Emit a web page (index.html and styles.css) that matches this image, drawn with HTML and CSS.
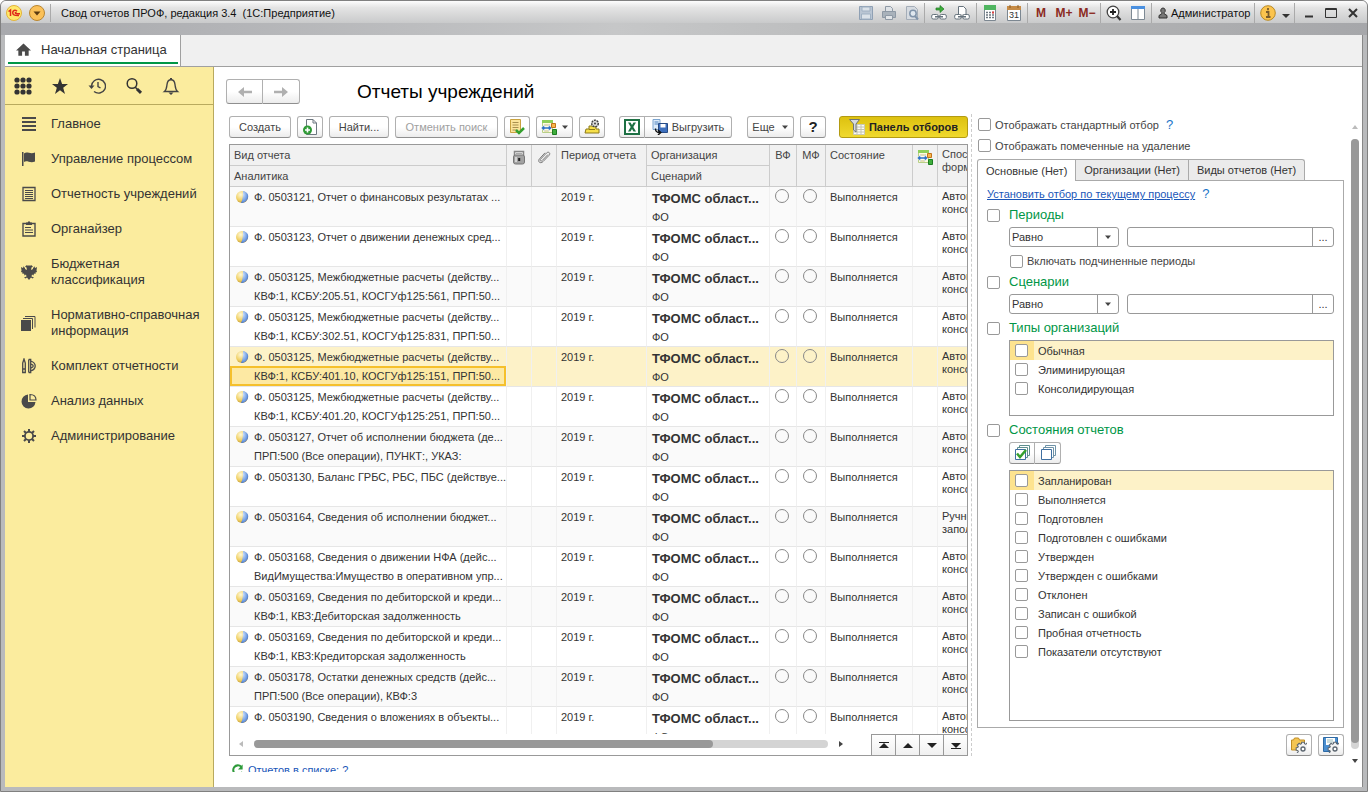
FILE: index.html
```html
<!DOCTYPE html>
<html lang="ru">
<head>
<meta charset="utf-8">
<title>Свод отчетов ПРОФ, редакция 3.4</title>
<link rel="stylesheet" href="styles.css">
</head>
<body>
<svg class="sprite" aria-hidden="true">
  <symbol id="i-down" viewBox="0 0 8 8"><path d="M1 2.500h6L4 6z" fill="#444"/></symbol>
  <symbol id="i-docarrow" viewBox="0 0 16 16"><path d="M1.500 1.500h10v12h-10z" fill="#fffbe0" stroke="#b7cf86"/><path d="M1 1h11v3H1z" fill="#8fd05a"/><path d="M3 6h6M3 12h5" stroke="#c5c08a"/><path d="M0 9l3.500-3v2h4V6L11 9l-3.500 3v-2h-4v2z" fill="#2b6fc4" stroke="#fff" stroke-width=".5"/><path d="M10.500 4.500h4v4h-4z" fill="#f7b64a" stroke="#c2731a"/><path d="M11.500 10.500h4v5h-4z" fill="#3fae3c" stroke="#1e7d22"/></symbol>
  <symbol id="i-ball" viewBox="0 0 14 14"><defs><radialGradient id="gy" cx=".4" cy=".3" r=".8"><stop offset="0" stop-color="#fff9d8"/><stop offset=".6" stop-color="#f0cf62"/><stop offset="1" stop-color="#b08a2c"/></radialGradient><radialGradient id="gb" cx=".3" cy=".3" r=".9"><stop offset="0" stop-color="#c9defb"/><stop offset=".6" stop-color="#6e9be2"/><stop offset="1" stop-color="#31549c"/></radialGradient></defs><circle cx="7" cy="7" r="6" fill="url(#gy)"/><path d="M8 1c4 .6 6 4 5 7s-4 5.500-7 4.900C8 9 8 5 8 1z" fill="url(#gb)"/></symbol>
  <symbol id="i-gear" viewBox="0 0 16 16"><path d="M8 1v14M1 8h14M3 3l10 10M13 3L3 13" stroke="currentColor" stroke-width="2"/><circle cx="8" cy="8" r="5" fill="currentColor"/><circle cx="8" cy="8" r="3.200" fill="#fbec9e"/></symbol>
  <symbol id="i-sgear" viewBox="0 0 12 12"><path d="M6 .5v11M.5 6h11M2.100 2.100l7.800 7.800M9.900 2.100L2.100 9.900" stroke="#5c6670" stroke-width="2.800"/><circle cx="6" cy="6" r="4.500" fill="#5c6670"/><path d="M6 1.300v9.400M1.300 6h9.400M2.700 2.700l6.600 6.600M9.300 2.700L2.700 9.300" stroke="#f3f3f3" stroke-width="1.400"/><circle cx="6" cy="6" r="3.700" fill="#f3f3f3"/><circle cx="6" cy="6" r="1.500" fill="#fff" stroke="#5c6670"/></symbol>
</svg>

<div class="window">
  <header class="titlebar">
    <div class="brand">
      <svg class="logo" viewBox="0 0 18 18"><circle cx="9" cy="9" r="7.500" fill="#ffe96b" stroke="#e3b33a"/><path d="M3.500 7.500l2-1.500v6M12 7.200c-2-1.800-4.500-.8-4.300 1.800.2 2.300 2 2.700 6.300 2.500M11.500 9c-1.500-.8-2 .8.500.8h3" fill="none" stroke="#e02a1c" stroke-width="1.500"/></svg>
      <button class="plain" aria-label="Главное меню"><svg class="logo" viewBox="0 0 18 18"><circle cx="9" cy="9" r="7.500" fill="#fbc158" stroke="#b98530"/><path d="M5.500 7.500h7L9 11.500z" fill="#5b3a10"/></svg></button>
    </div>
    <h1 class="app-title">Свод отчетов ПРОФ, редакция 3.4 &nbsp;(1С:Предприятие)</h1>
    <div class="tools">
      <div class="tg tg-a">
        <svg viewBox="0 0 16 16"><path d="M1.500 1.500h13v13h-13z" fill="#b9c5d3" stroke="#8fa0b4"/><path d="M4 2h8v4H4zM3.500 9h9v5h-9z" fill="#dbe2e9" stroke="#9fb0c2"/></svg>
        <svg viewBox="0 0 16 16" stroke="#8e99a5"><path d="M4.500 7V1.500h5l2 2V7" fill="#dfe3e7"/><path d="M1.500 6.500h13v6h-13z" fill="#a9b2bb"/><path d="M4.500 10.500h7v4h-7z" fill="#e2e5e8"/></svg>
        <svg viewBox="0 0 16 16"><path d="M2.500 1.500h8l3 3v10h-11z" fill="#d6dbe1" stroke="#a4adb8"/><circle cx="9" cy="8.500" r="3.200" fill="#dfe7ef" stroke="#8094aa" stroke-width="1.500"/><path d="M11 11l3 3.500" stroke="#8094aa" stroke-width="2"/></svg>
      </div>
      <div class="tg tg-b">
        <svg viewBox="0 0 16 16"><path d="M5 3h4V.5L13 4 9 7.500V5H5z" fill="#3fae3c" stroke="#1d7a22" stroke-width=".7"/><rect x=".7" y="9.500" width="6.500" height="4.500" rx="1.500" fill="#fff" stroke="#66737d"/><rect x="8.800" y="9.500" width="6.500" height="4.500" rx="1.500" fill="#fff" stroke="#66737d"/><path d="M4 11.800h8" stroke="#66737d" stroke-width="1.500"/></svg>
        <svg viewBox="0 0 16 16"><path d="M4.500 9V1.500h5l2.500 2.500v5" fill="#fff" stroke="#66737d"/><rect x=".7" y="9.500" width="6.500" height="4.500" rx="1.500" fill="#fff" stroke="#66737d"/><rect x="8.800" y="9.500" width="6.500" height="4.500" rx="1.500" fill="#fff" stroke="#66737d"/><path d="M4 11.800h8" stroke="#66737d" stroke-width="1.500"/></svg>
      </div>
      <div class="tg tg-c">
        <svg viewBox="0 0 16 16"><path d="M2.500.5h11v15h-11z" fill="#fff" stroke="#7c8791"/><path d="M2 0h12v5H2z" fill="#4fb560"/><path d="M4 7.500h8M4 10h8M4 12.500h8" stroke="#6d7780" stroke-width="1.500" stroke-dasharray="2 1"/><path d="M10 6.500h2v2h-2z" fill="#d44"/></svg>
        <svg viewBox="0 0 16 16"><path d="M1.500 2.500h13v13h-13z" fill="#fff" stroke="#7c8791"/><path d="M1 1h14v4H1z" fill="#c68b45"/><path d="M4 0v3M12 0v3" stroke="#8a5a22"/><text x="8" y="13" text-anchor="middle" class="cal">31</text></svg>
      </div>
      <div class="tg tg-d"><button class="mem">M</button><button class="mem">M+</button><button class="mem">M−</button></div>
      <div class="tg tg-e">
        <svg viewBox="0 0 16 16"><circle cx="7" cy="7" r="5.800" fill="#fff" stroke="#444" stroke-width="1.300"/><path d="M7 4v6M4 7h6" stroke="#222" stroke-width="1.800"/><path d="M11 11l3.500 4" stroke="#333" stroke-width="2.200"/></svg>
        <svg viewBox="0 0 16 16"><path d="M1.500 1.500h13v13h-13zM8 4v10" fill="#fff" stroke="#7d8994"/><path d="M1 1h14v3H1z" fill="#4a90e0"/></svg>
      </div>
      <div class="tg tg-f"><svg class="person" viewBox="0 0 10 12"><path d="M5 1a2.300 2.500 0 0 1 1.200 4.600v1.200L9 8.500V11H1V8.500l2.800-1.700V5.600A2.300 2.500 0 0 1 5 1z" fill="#777" stroke="#333"/></svg><span>Администратор</span></div>
      <div class="tg tg-g">
        <svg viewBox="0 0 16 16"><circle cx="8" cy="8" r="7.300" fill="#fbc44e" stroke="#b98a25"/><path d="M8 3v2.200M6 7h2.500v5M6 12h4.500" stroke="#7a5c2c" stroke-width="1.800" fill="none"/></svg>
        <svg class="tiny low" viewBox="0 0 8 8"><path d="M0 2h8L4 6z" fill="#333"/></svg>
      </div>
      <div class="tg tg-h">
        <button class="plain" aria-label="Свернуть"><svg class="win" viewBox="0 0 12 12"><path d="M2 9.500h8" stroke="#333" stroke-width="2"/></svg></button>
        <button class="plain" aria-label="Развернуть"><svg class="win" viewBox="0 0 12 12"><path d="M.5 1.500h11v9H.5zM.5 2.500h11" fill="none" stroke="#333"/></svg></button>
        <button class="plain" aria-label="Закрыть"><svg class="win" viewBox="0 0 12 12"><path d="M2 2l8 8M10 2l-8 8" stroke="#333" stroke-width="2"/></svg></button>
      </div>
    </div>
  </header>
  <div class="band"></div>

  <div class="body">
    <nav class="tabbar">
      <a class="home" href="#"><svg viewBox="0 0 16 14"><path d="M8 0l8 7.500h-2.500V13h-4V8.500h-3V13h-4V7.500H0z" fill="#4a4a4a"/></svg><span>Начальная страница</span></a>
    </nav>
    <div class="columns">
      <aside class="sidebar">
        <div class="quick">
          <button class="plain" aria-label="Меню функций"><svg viewBox="0 0 18 18" fill="#333"><circle cx="3" cy="3" r="2.600"/><circle cx="9" cy="3" r="2.600"/><circle cx="15" cy="3" r="2.600"/><circle cx="3" cy="9" r="2.600"/><circle cx="9" cy="9" r="2.600"/><circle cx="15" cy="9" r="2.600"/><circle cx="3" cy="15" r="2.600"/><circle cx="9" cy="15" r="2.600"/><circle cx="15" cy="15" r="2.600"/></svg></button>
          <button class="plain" aria-label="Избранное"><svg viewBox="0 0 18 18"><path d="M9 1l2.100 5.900H17l-4.800 3.800L14 17l-5-3.700L4 17l1.800-6.300L1 6.900h5.900z" fill="#333"/></svg></button>
          <button class="plain" aria-label="История"><svg viewBox="0 0 18 18" fill="none" stroke="#444" stroke-width="1.400"><path d="M3.500 9A7 6.900 0 1 1 6 14.500M10 5v4.500l2.500 1.500"/><path d="M.5 8.500h6L3.500 12z" fill="#444" stroke="none"/></svg></button>
          <button class="plain" aria-label="Поиск"><svg viewBox="0 0 18 18" fill="none" stroke="#333"><circle cx="7" cy="6.500" r="4.800" stroke-width="1.500"/><path d="M10.300 10.300l2 2" stroke-width="1.500"/><path d="M12 12l4 3.800" stroke-width="3"/></svg></button>
          <button class="plain" aria-label="Оповещения"><svg viewBox="0 0 18 18"><path d="M2.500 14.500c2-1.500 2-3 2.500-7 .4-3.500 2-4.800 4-4.800s3.600 1.300 4 4.800c.5 4 .5 5.500 2.500 7z" fill="none" stroke="#444" stroke-width="1.400"/><path d="M6.500 15.500h5L9 18zM8 1h2v2H8z" fill="#444"/></svg></button>
        </div>
        <ul class="nav">
          <li><a href="#"><svg viewBox="0 0 16 16" fill="#4a4a4a"><path d="M1 1h14v2H1zM1 5h14v2H1zM1 9h14v2H1zM1 13h14v2H1z"/></svg><span>Главное</span></a></li>
          <li><a href="#"><svg viewBox="0 0 16 16" fill="#4a4a4a"><path d="M1 1h1.500v14H1zM3 2.500c3-2.500 6 1 11-1v9c-5 2-8-1.500-11 .5z"/></svg><span>Управление процессом</span></a></li>
          <li><a href="#"><svg viewBox="0 0 16 16" fill="none" stroke="#4a4a4a"><path d="M2 1.500h12v13H2z" stroke-width="1.300"/><path d="M4 4.500h8M4 6.500h8M4 8.500h8M4 10.500h8M4 12.500h8"/></svg><span>Отчетность учреждений</span></a></li>
          <li><a href="#"><svg viewBox="0 0 16 16" fill="none" stroke="#4a4a4a"><path d="M2 2.500h12v12.500H2z" stroke-width="1.400"/><path d="M4 6.500h6M4 9h8M4 11.500h8"/><path d="M5 1.500h1.500L8 0l1.500 1.500H11V4H5z" fill="#4a4a4a" stroke="none"/></svg><span>Органайзер</span></a></li>
          <li><a href="#"><svg viewBox="0 0 16 16" fill="#4a4a4a"><path d="M8 1l1 1 1-1 2 1.500-1.500 1L10 6l2-1V3l1 1 .3-2 .9 2L16 3l-.5 3.500L16 8l-1.500.5V10L13 9.500l-.5 2L11 10.500l-.5 2 2.500 1-1.500 1-1.500-1L8 16l-2-2.500-1.500 1-1.500-1 2.500-1-.5-2-1.500 1-.5-2-1.500.5V8.500L0 8l.5-1.500L0 3l1.800 1 .9-2L3 4l1-1v2l2 1-.5-2.500-1.500-1L6 1l1 1z"/></svg><span>Бюджетная классификация</span></a></li>
          <li><a href="#"><svg viewBox="0 0 16 16"><path d="M0 5h10v11H0z" fill="#4a4a4a"/><path d="M2 3.500h9.500V14M4 1.500h10v11" fill="none" stroke="#4a4a4a"/></svg><span>Нормативно-справочная информация</span></a></li>
          <li><a href="#"><svg viewBox="0 0 16 16" fill="none" stroke="#4a4a4a" stroke-width="1.300"><path d="M1.700 5L3 1l1.300 4v9.500H1.700zM1.500 11h3M7.700 1.500v13M7.700 1.500h2v13h-2M9.700 3c6 2 6 8 0 10M10 6c3 1 3 3 0 4"/></svg><span>Комплект отчетности</span></a></li>
          <li><a href="#"><svg viewBox="0 0 16 16"><path d="M7 1.500V9h7.500A7 7 0 1 1 7 1.500z" fill="#4a4a4a"/><path d="M9 1.500c3.500 0 6 2 6 5.500H9z" fill="none" stroke="#4a4a4a" stroke-width="1.200"/></svg><span>Анализ данных</span></a></li>
          <li><a href="#"><svg viewBox="0 0 16 16" color="#4a4a4a"><use href="#i-gear"/></svg><span>Администрирование</span></a></li>
        </ul>
      </aside>

      <main class="main">
        <div class="heading">
          <div class="joined hist">
            <button class="btn" aria-label="Назад"><svg viewBox="0 0 16 12"><path d="M1 6l6-5v3.800h8v2.400H7V11z" fill="#b0b0b0"/></svg></button>
            <button class="btn" aria-label="Вперед"><svg viewBox="0 0 16 12"><path d="M15 6L9 1v3.800H1v2.400h8V11z" fill="#b0b0b0"/></svg></button>
          </div>
          <h2>Отчеты учреждений</h2>
        </div>

        <div class="workspace">
          <section class="reports">
            <div class="toolbar">
              <button class="btn w-create">Создать</button>
              <button class="btn sq" aria-label="Создать новый"><svg viewBox="0 0 16 16"><path d="M4.500.5h6.500l3.500 3.500v11.500h-10zM11 .5V4h3.500" fill="#fff" stroke="#6d7780"/><circle cx="5.500" cy="11" r="4.500" fill="#2f9a36"/><path d="M5.500 8.500v5M3 11h5" stroke="#fff" stroke-width="1.600"/></svg></button>
              <button class="btn w-find">Найти...</button>
              <button class="btn w-cancel" disabled>Отменить поиск</button>
              <button class="btn sq" aria-label="Проверить"><svg viewBox="0 0 16 16"><path d="M1.500.5h10v13h-10z" fill="#fbe49b" stroke="#c9a23f"/><path d="M3.500 3.500h6M3.500 6h6M3.500 8.500h6M3.500 11h4" stroke="#a8904f"/><path d="M7 11l3 3 5-5" fill="none" stroke="#35a02f" stroke-width="2.500"/></svg></button>
              <button class="btn w-drop" aria-label="Действия"><svg viewBox="0 0 16 16"><use href="#i-docarrow"/></svg><svg class="tiny"><use href="#i-down"/></svg></button>
              <button class="btn sq" aria-label="Настройка"><svg viewBox="0 0 16 16"><path d="M5 7h7v3h3v4H1l1-4h3z" fill="#f7e04a" stroke="#8c7a1a"/><path d="M5 10.500h6" stroke="#8c7a1a"/><circle cx="11" cy="4.500" r="3.300" fill="#ddd" stroke="#444" stroke-width="1.500" stroke-dasharray="2 .8"/><circle cx="11" cy="4.500" r="1" fill="#444"/></svg></button>
              <div class="joined export">
                <button class="btn sq" aria-label="Excel"><svg viewBox="0 0 16 16"><path d="M1 1h14v14H1z" fill="#fff" stroke="#1d7044" stroke-width="2"/><path d="M4 3.500h2.500L8 6l1.500-2.500H12L9.300 8l2.700 4.500H9.500L8 10l-1.500 2.500H4L6.700 8z" fill="#1d7044"/></svg></button>
                <button class="btn w-export"><svg viewBox="0 0 16 16"><path d="M1 .5h7v10H1z" fill="#dcebfa" stroke="#7ba4cf"/><path d="M2.500 3h4M2.500 5h4" stroke="#4f83bf"/><path d="M6.500 4.500h9v9h-9z" fill="#3d6fbd" stroke="#274b86"/><path d="M8.500 5h5v3.500h-5z" fill="#fff"/><path d="M3.500 9.500c0 3.500 1.500 4 4.500 4M6 11l2.800 2.500L6 16" fill="none" stroke="#111" stroke-width="1.400"/></svg>Выгрузить</button>
              </div>
              <button class="btn w-more">Еще<svg class="tiny"><use href="#i-down"/></svg></button>
              <button class="btn sq help">?</button>
              <button class="btn w-panel"><svg viewBox="0 0 16 16"><path d="M4.500 5.500h11v10h-11z" fill="#fbfbf5" stroke="#c9c9b5"/><path d="M5 8h10M5 10.500h10M5 13h10M8 6v9M12 6v9" stroke="#c4c4b0"/><path d="M.5.500h10L7 5v8l-2.500-2V5z" fill="#d7dbdd" stroke="#6e7477"/></svg>Панель отборов</button>
            </div>

            <div class="grid">
              <div class="grid-view">
                <table>
                  <colgroup><col class="c-kind"><col class="c-ico"><col class="c-ico"><col class="c-period"><col class="c-org"><col class="c-vf"><col class="c-mf"><col class="c-state"><col class="c-ico"><col></colgroup>
                  <thead>
                    <tr><th>Вид отчета</th>
                      <th rowspan="2" class="ic"><svg viewBox="0 0 16 16"><path d="M3.500 7V2.500h9V7" fill="#eee" stroke="#888" stroke-width="1.500"/><path d="M5 4.500h6" stroke="#aaa"/><rect x="2.500" y="6" width="11" height="9" rx="2" fill="#a2a2a2" stroke="#777"/><path d="M4 8h2v5H4z" fill="#d5d5d5"/><path d="M7.200 9h2v3h-2z" fill="#222"/></svg></th>
                      <th rowspan="2" class="ic"><svg viewBox="0 0 16 16"><path d="M12 5.500l-5.800 6c-1.300 1.300-2.900 0-1.600-1.400L10.500 4c2-2 4.500.3 2.500 2.400l-6 6.200c-2.800 2.800-6-.3-3.300-3L9 3.800" fill="none" stroke="#777"/></svg></th>
                      <th rowspan="2">Период отчета</th><th>Организация</th><th rowspan="2" class="nar">ВФ</th><th rowspan="2" class="nar">МФ</th><th rowspan="2">Состояние</th>
                      <th rowspan="2" class="ic"><svg viewBox="0 0 16 16"><use href="#i-docarrow"/></svg></th>
                      <th rowspan="2" class="two">Спосо<br>форм</th></tr>
                    <tr><th>Аналитика</th><th>Сценарий</th></tr>
                  </thead>
                  <tbody id="rows"></tbody>
                </table>
              </div>
              <div class="grid-foot">
                <div class="hscroll">
                  <svg class="tiny" viewBox="0 0 8 8"><path d="M6 1v6L2 4z" fill="#bbb"/></svg>
                  <div class="htrack"><div class="hthumb"></div></div>
                  <svg class="tiny" viewBox="0 0 8 8"><path d="M2 1v6l4-3z" fill="#444"/></svg>
                </div>
                <button class="step" aria-label="В начало"><svg viewBox="0 0 12 10"><path d="M1 2.500h10" stroke="#222"/><path d="M1 8h10L6 3z" fill="#222"/></svg></button>
                <button class="step" aria-label="Вверх"><svg viewBox="0 0 12 10"><path d="M1 8h10L6 3z" fill="#222"/></svg></button>
                <button class="step" aria-label="Вниз"><svg viewBox="0 0 12 10"><path d="M1 3h10L6 8z" fill="#222"/></svg></button>
                <button class="step" aria-label="В конец"><svg viewBox="0 0 12 10"><path d="M1 8.500h10" stroke="#222"/><path d="M1 3h10L6 8z" fill="#222"/></svg></button>
              </div>
            </div>
            <div class="count"><svg viewBox="0 0 14 14"><path d="M11 3.500A5 5 0 1 0 12 9" fill="none" stroke="#2e9a3a" stroke-width="2.200"/><path d="M12.500 1v5.500H7.500z" fill="#2e9a3a"/></svg><a href="#">Отчетов в списке: ?</a></div>
          </section>

          <section class="filters">
            <div class="chk"><input type="checkbox" id="f1"><label for="f1">Отображать стандартный отбор</label><a class="q" href="#">?</a></div>
            <div class="chk"><input type="checkbox" id="f2"><label for="f2">Отображать помеченные на удаление</label></div>
            <div class="tabs"><button class="tab on">Основные (Нет)</button><button class="tab">Организации (Нет)</button><button class="tab">Виды отчетов (Нет)</button></div>
            <div class="pane">
              <div class="linkrow"><a href="#">Установить отбор по текущему процессу</a><a class="q" href="#">?</a></div>
              <div class="head"><input type="checkbox" id="s1"><label for="s1">Периоды</label></div>
              <div class="cond"><div class="sel"><select aria-label="Вид сравнения периода"><option>Равно</option></select><svg class="tiny"><use href="#i-down"/></svg></div><div class="pick"><input type="text" aria-label="Период"><button>...</button></div></div>
              <div class="chk sub"><input type="checkbox" id="s1a"><label for="s1a">Включать подчиненные периоды</label></div>
              <div class="head"><input type="checkbox" id="s2"><label for="s2">Сценарии</label></div>
              <div class="cond"><div class="sel"><select aria-label="Вид сравнения сценария"><option>Равно</option></select><svg class="tiny"><use href="#i-down"/></svg></div><div class="pick"><input type="text" aria-label="Сценарий"><button>...</button></div></div>
              <div class="head gap"><input type="checkbox" id="s3"><label for="s3">Типы организаций</label></div>
              <ul class="list short">
                <li><input type="checkbox" id="t1"><label for="t1">Обычная</label></li>
                <li><input type="checkbox" id="t2"><label for="t2">Элиминирующая</label></li>
                <li><input type="checkbox" id="t3"><label for="t3">Консолидирующая</label></li>
              </ul>
              <div class="head gap"><input type="checkbox" id="s4"><label for="s4">Состояния отчетов</label></div>
              <div class="joined marks">
                <button class="btn sq" aria-label="Отметить все"><svg viewBox="0 0 16 16" fill="#fff" stroke="#5f8f8f"><path d="M5.500.5h10v10h-10z"/><path d="M3.500 2.500h10v10h-10z"/><path d="M1.500 4.500h10v10h-10z" stroke="#3f6fa0"/><path d="M3 8.500l3 3.500 6-7" fill="none" stroke="#35a02f" stroke-width="2.500"/></svg></button>
                <button class="btn sq" aria-label="Снять все"><svg viewBox="0 0 16 16" fill="#fff" stroke="#6f93a8"><path d="M5.500.5h10v10h-10z"/><path d="M3.500 2.500h10v10h-10z"/><path d="M1.500 4.500h10v10h-10z" stroke="#3f6fa0"/></svg></button>
              </div>
              <ul class="list tall">
                <li><input type="checkbox" id="r0"><label for="r0">Запланирован</label></li>
                <li><input type="checkbox" id="r1"><label for="r1">Выполняется</label></li>
                <li><input type="checkbox" id="r2"><label for="r2">Подготовлен</label></li>
                <li><input type="checkbox" id="r3"><label for="r3">Подготовлен с ошибками</label></li>
                <li><input type="checkbox" id="r4"><label for="r4">Утвержден</label></li>
                <li><input type="checkbox" id="r5"><label for="r5">Утвержден с ошибками</label></li>
                <li><input type="checkbox" id="r6"><label for="r6">Отклонен</label></li>
                <li><input type="checkbox" id="r7"><label for="r7">Записан с ошибкой</label></li>
                <li><input type="checkbox" id="r8"><label for="r8">Пробная отчетность</label></li>
                <li><input type="checkbox" id="r9"><label for="r9">Показатели отсутствуют</label></li>
              </ul>
            </div>
            <div class="presets">
              <button class="btn sq" aria-label="Выбрать настройки"><svg viewBox="0 0 16 16"><path d="M.5 3h2l1-2h4l1 2h5v10H.5z" fill="#f4c552" stroke="#c08d24"/><svg x="4" y="4" width="12" height="12"><use href="#i-sgear"/></svg></svg></button>
              <button class="btn sq" aria-label="Сохранить настройки"><svg viewBox="0 0 16 16"><path d="M.5.5h14v14H.5z" fill="#4b8fd0" stroke="#2e6aa5"/><path d="M3 1h9v7H3z" fill="#fff"/><path d="M4 3h6M4 5h6" stroke="#9bb"/><svg x="4" y="4" width="12" height="12"><use href="#i-sgear"/></svg></svg></button>
            </div>
          </section>

          <div class="vscroll">
            <svg class="tiny" viewBox="0 0 8 8"><path d="M1 6h6L4 2z" fill="#bbb"/></svg>
            <div class="vtrack"><div class="vthumb"></div></div>
            <svg class="tiny" viewBox="0 0 8 8"><path d="M1 2h6L4 6z" fill="#444"/></svg>
          </div>
        </div>
      </main>
    </div>
  </div>
</div>
<script src="rows.js"></script>
</body>
</html>
```
FILE: rows.js
```js
const auto = ["Автом", "консо"];
const manual = ["Ручно", "запол"];
const reports = [
  ["Ф. 0503121, Отчет о финансовых результатах ...", "", auto],
  ["Ф. 0503123, Отчет о движении денежных сред...", "", auto],
  ["Ф. 0503125, Межбюджетные расчеты (действу...", "КВФ:1, КСБУ:205.51, КОСГУф125:561, ПРП:50...", auto],
  ["Ф. 0503125, Межбюджетные расчеты (действу...", "КВФ:1, КСБУ:302.51, КОСГУф125:831, ПРП:50...", auto],
  ["Ф. 0503125, Межбюджетные расчеты (действу...", "КВФ:1, КСБУ:401.10, КОСГУф125:151, ПРП:50...", auto],
  ["Ф. 0503125, Межбюджетные расчеты (действу...", "КВФ:1, КСБУ:401.20, КОСГУф125:251, ПРП:50...", auto],
  ["Ф. 0503127, Отчет об исполнении бюджета (де...", "ПРП:500 (Все операции), ПУНКТ:, УКАЗ:", auto],
  ["Ф. 0503130, Баланс ГРБС, РБС, ПБС (действуе...", "", auto],
  ["Ф. 0503164, Сведения об исполнении бюджет...", "", manual],
  ["Ф. 0503168, Сведения о движении НФА (дейс...", "ВидИмущества:Имущество в оперативном упр...", auto],
  ["Ф. 0503169, Сведения по дебиторской и креди...", "КВФ:1, КВЗ:Дебиторская задолженность", auto],
  ["Ф. 0503169, Сведения по дебиторской и креди...", "КВФ:1, КВЗ:Кредиторская задолженность", auto],
  ["Ф. 0503178, Остатки денежных средств (дейс...", "ПРП:500 (Все операции), КВФ:3", auto],
  ["Ф. 0503190, Сведения о вложениях в объекты...", "", auto]
];
const selected = 4;
document.getElementById("rows").innerHTML = reports.map(([name, detail, way], i) => `
  <tr class="${i === selected ? "sel-row" : ""}">
    <td class="kind"><div class="name"><svg viewBox="0 0 14 14"><use href="#i-ball"/></svg><span>${name}</span></div><div class="detail">${detail}</div></td>
    <td></td><td></td>
    <td><div class="line">2019 г.</div></td>
    <td><div class="org">ТФОМС област...</div><div class="scen">ФО</div></td>
    <td class="dot"><i></i></td><td class="dot"><i></i></td>
    <td><div class="line">Выполняется</div></td>
    <td></td>
    <td class="way">${way[0]}<br>${way[1]}</td>
  </tr>`).join("");
```
FILE: styles.css
```css
* { box-sizing: border-box; }
body { margin: 0; font: 11px/14px "Liberation Sans", Arial, sans-serif; color: #333; }
button, input, select { font: inherit; color: inherit; margin: 0; padding: 0; }
h1, h2, ul { margin: 0; padding: 0; font-weight: normal; list-style: none; }
svg { display: block; flex: none; width: 16px; height: 16px; }
.sprite { position: absolute; width: 0; height: 0; }
.tiny { width: 8px; height: 8px; }
.plain { border: 0; background: none; }

.window { height: 100vh; display: flex; flex-direction: column; padding: 0 4px 4px; border: 1px solid #808080; border-radius: 6px 6px 0 0; background: #b9babc; overflow: hidden; }
.titlebar { display: flex; align-items: center; height: 22px; margin: 0 -4px; padding: 2px 0 0 4px; background: linear-gradient(#fdfdfd, #e4e4e4 30%, #c9cacb); flex: none; }
.brand { display: flex; gap: 5px; width: 46px; flex: none; border-right: 1px solid #aaa; }
.logo { width: 18px; height: 18px; }
.app-title { flex: 1; padding-left: 10px; font-size: 11px; color: #111; white-space: nowrap; }
.tools { display: flex; }
.tg { display: flex; align-items: center; justify-content: center; gap: 7px; height: 20px; border-left: 1px solid #aaa; }
.tg-a { width: 70px; border-left: 0; }
.tg-b { width: 52px; }
.tg-c { width: 51px; gap: 8px; }
.tg-d { width: 73px; gap: 0; }
.tg-e { width: 51px; gap: 8px; }
.tg-f { width: 103px; justify-content: flex-start; gap: 3px; padding-left: 6px; color: #111; }
.tg-g { width: 40px; gap: 6px; }
.tg-h { width: 73px; gap: 10px; }
.person { width: 10px; height: 12px; }
.win { width: 12px; height: 12px; }
.low { margin-top: 6px; }
.mem { width: 23px; border: 0; background: none; color: #8b2a22; font-weight: bold; font-size: 12px; }
.cal { font: 9px "Liberation Sans", sans-serif; fill: #333; }
.band { height: 12px; flex: none; margin: 0 -4px; background: linear-gradient(90deg, #a8a9ad, #c6c7c8 45%, #b4b5b6 75%, #a6a7aa); }

.body { flex: 1; min-height: 0; display: flex; flex-direction: column; background: #fff; border-right: 1px solid #888; }
.tabbar { display: flex; height: 32px; flex: none; background: #f0f0f0; border-bottom: 1px solid #a0a0a0; }
.home { display: flex; align-items: center; gap: 10px; width: 176px; padding: 0 0 2px 11px; background: linear-gradient(#009646, #009646) 3px 27px / 170px 2px no-repeat #fff; border-right: 1px solid #a0a0a0; color: #333; font-size: 13px; text-decoration: none; }
.home svg { height: 14px; width: 15px; }
.columns { flex: 1; min-height: 0; display: flex; }

.sidebar { width: 209px; flex: none; background: #fbec9e; border-right: 1px solid #b9aa5e; }
.quick { display: flex; gap: 19px; align-items: center; height: 38px; padding-left: 9px; border-bottom: 1px solid #b9aa5e; }
.quick svg { width: 18px; height: 18px; }
.nav { padding-top: 2px; }
.nav a { display: flex; align-items: center; gap: 14px; padding: 9px 12px 10px 16px; color: #333; font-size: 13px; line-height: 16px; text-decoration: none; }

.main { flex: 1; min-width: 0; display: flex; flex-direction: column; padding: 12px 0 0 12px; }
.heading { display: flex; align-items: center; gap: 57px; height: 25px; flex: none; }
h2 { font-size: 19px; line-height: 24px; color: #000; }
.hist .btn { width: 37px; height: 25px; }
.hist svg { width: 16px; height: 12px; }
.workspace { flex: 1; min-height: 0; display: flex; padding: 10px 0 15px 3px; }
.reports { flex: 1; min-width: 0; display: flex; flex-direction: column; padding-top: 2px; overflow: hidden; }

.btn { display: flex; align-items: center; justify-content: center; gap: 4px; height: 22px; border: 1px solid #b0b0b0; border-bottom-color: #8f8f8f; border-radius: 3px; background: linear-gradient(#fff 50%, #ececec); color: #444; white-space: nowrap; flex: none; }
.btn:disabled { color: #a0a0a0; }
.sq { width: 26px; }
.joined { display: flex; }
.joined .btn:first-child { border-radius: 3px 0 0 3px; }
.joined .btn:last-child { border-radius: 0 3px 3px 0; border-left: 0; }
.toolbar { display: flex; gap: 6px; height: 22px; flex: none; }
.w-create { width: 62px; }
.w-find { width: 60px; }
.w-cancel { width: 103px; }
.w-drop { width: 37px; }
.export { margin-left: 8px; }
.w-export { width: 87px; }
.w-more { width: 47px; gap: 6px; margin-left: 9px; }
.help { font-size: 15px; font-weight: bold; color: #222; }
.w-panel { margin-left: auto; width: 129px; border-color: #b39b12; background: linear-gradient(#ddc10f, #f0d92e); color: #222; font-weight: bold; }

.grid { flex: 1; min-height: 0; display: flex; flex-direction: column; margin-top: 6px; border: 1px solid #999; }
.grid-view { flex: 1; min-height: 0; overflow: hidden; }
table { table-layout: fixed; width: 100%; border-collapse: separate; border-spacing: 0; }
.c-kind { width: 277px; }
.c-ico { width: 25px; }
.c-period { width: 90px; }
.c-org { width: 123px; }
.c-vf { width: 27px; }
.c-mf { width: 29px; }
.c-state { width: 87px; }
th { height: 21px; padding: 3px 4px 2px; border-right: 1px solid #ccc; border-bottom: 1px solid #ccc; background: #f1f1f1; color: #444; font-weight: normal; text-align: left; vertical-align: top; white-space: nowrap; overflow: hidden; }
th.ic { padding: 4px; }
th.nar { padding: 3px 0; text-align: center; }
th.two { line-height: 13px; }
th:last-child, td:last-child { border-right: 0; }
thead tr:last-child th { border-right: 1px solid #ccc; }
td { height: 40px; padding: 0; border-right: 1px solid #f0f0f0; border-bottom: 1px solid #e6e6e6; vertical-align: top; white-space: nowrap; overflow: hidden; }
tbody tr:nth-child(odd) { background: #fafafa; }
tbody tr.sel-row { background: #fdf2c8; }
.name { display: flex; gap: 5px; height: 19px; padding: 3px 0 0 5px; }
.name svg { width: 14px; height: 14px; }
.detail { height: 20px; padding: 3px 0 0 24px; }
.sel-row .detail { padding: 1px 0 0 22px; border: 2px solid #f5c02c; background: #fde9a3; }
.line { padding: 3px 4px; }
.org { padding: 5px 0 0 5px; font-size: 13px; font-weight: bold; }
.scen { padding: 4px 0 0 5px; }
.dot { padding-right: 2px; }
.dot i { display: block; width: 14px; height: 14px; margin: 2px auto 0; border: 1px solid #888; border-radius: 50%; }
.way { padding: 3px 0 0 4px; line-height: 13px; }

.grid-foot { display: flex; height: 21px; flex: none; }
.hscroll { flex: 1; display: flex; align-items: center; gap: 9px; padding: 0 26px 2px 7px; }
.htrack { flex: 1; height: 8px; border-radius: 4px; background: #d4d4d4; }
.hthumb { width: 80%; height: 8px; border-radius: 4px; background: #999; }
.step { display: grid; place-items: center; width: 24px; border: 0; border-left: 1px solid #999; border-top: 1px solid #999; background: linear-gradient(#fff, #f0f0f0); }
.step svg { width: 12px; height: 10px; }
.count { display: flex; gap: 4px; height: 16px; padding: 7px 0 0 2px; flex: none; overflow: hidden; }
.count svg { width: 13px; height: 14px; }
a { color: #1a56b8; }
.count a { text-decoration: none; }

.filters { width: 373px; flex: none; display: flex; flex-direction: column; margin: 0 0 16px 3px; padding-left: 5px; border-left: 1px dashed #ccc; }
.chk { display: flex; align-items: center; gap: 4px; height: 21px; color: #444; }
input[type="checkbox"] { appearance: none; flex: none; width: 13px; height: 13px; margin-left: 1px; border: 1px solid #999; border-radius: 2px; background: #fff; }
.q { margin-left: 3px; color: #1a75c8; font-size: 13px; text-decoration: none; }
.tabs { display: flex; align-items: flex-end; margin-top: 3px; flex: none; z-index: 1; }
.tab { height: 21px; padding: 0 8px; margin-bottom: 1px; border: 1px solid #aaa; border-left: 0; background: #ebebeb; border-bottom: 0; }
.tab.on { height: 22px; margin-bottom: 0; border-left: 1px solid #aaa; border-radius: 3px 0 0 0; background: #fff; }
.tab:last-child { border-radius: 0 3px 0 0; }
.pane { flex: 1; min-height: 0; display: flex; flex-direction: column; margin-top: -1px; padding: 3px 9px 6px; border: 1px solid #aaa; }
.linkrow { display: flex; align-items: center; gap: 4px; height: 20px; }
.head { display: flex; align-items: center; gap: 9px; height: 20px; margin-top: 1px; color: #009646; font-size: 13px; }
.head.gap { margin-top: 4px; }
.head input { margin-left: 0; }
.cond { display: flex; gap: 8px; height: 20px; margin: 2px 0 0 22px; }
.sel { display: flex; align-items: center; width: 110px; border: 1px solid #999; border-radius: 3px; padding-right: 6px; }
.sel select { appearance: none; flex: 1; height: 18px; padding-left: 2px; margin-right: 6px; border: 0; border-right: 1px solid #999; border-radius: 0; background: none; }
.pick { flex: 1; display: flex; border: 1px solid #999; border-radius: 3px; }
.pick input { flex: 1; min-width: 0; border: 0; background: none; }
.pick button { width: 21px; border: 0; border-left: 1px solid #999; background: none; }
.sub { height: 20px; margin: 4px 0 0 22px; }
.list { margin: 2px 0 0 22px; border: 1px solid #999; }
.short { height: 76px; }
.list.tall { flex: 1; margin-top: 6px; }
.list li { display: flex; align-items: center; gap: 10px; height: 19px; padding-left: 4px; }
.list li:first-child { background: linear-gradient(90deg, #fde38f 24px, #fdf2c8 24px); }
.marks { margin: 2px 0 0 22px; }
.presets { display: flex; justify-content: flex-end; gap: 6px; padding-top: 6px; height: 28px; }
.vscroll { width: 14px; flex: none; display: flex; flex-direction: column; align-items: center; gap: 8px; padding: 9px 0 7px; margin-left: 4px; }
.vtrack { flex: 1; width: 8px; border-radius: 4px; background: #d4d4d4; }
.vthumb { width: 8px; height: 99%; border-radius: 4px; background: #999; }
```
